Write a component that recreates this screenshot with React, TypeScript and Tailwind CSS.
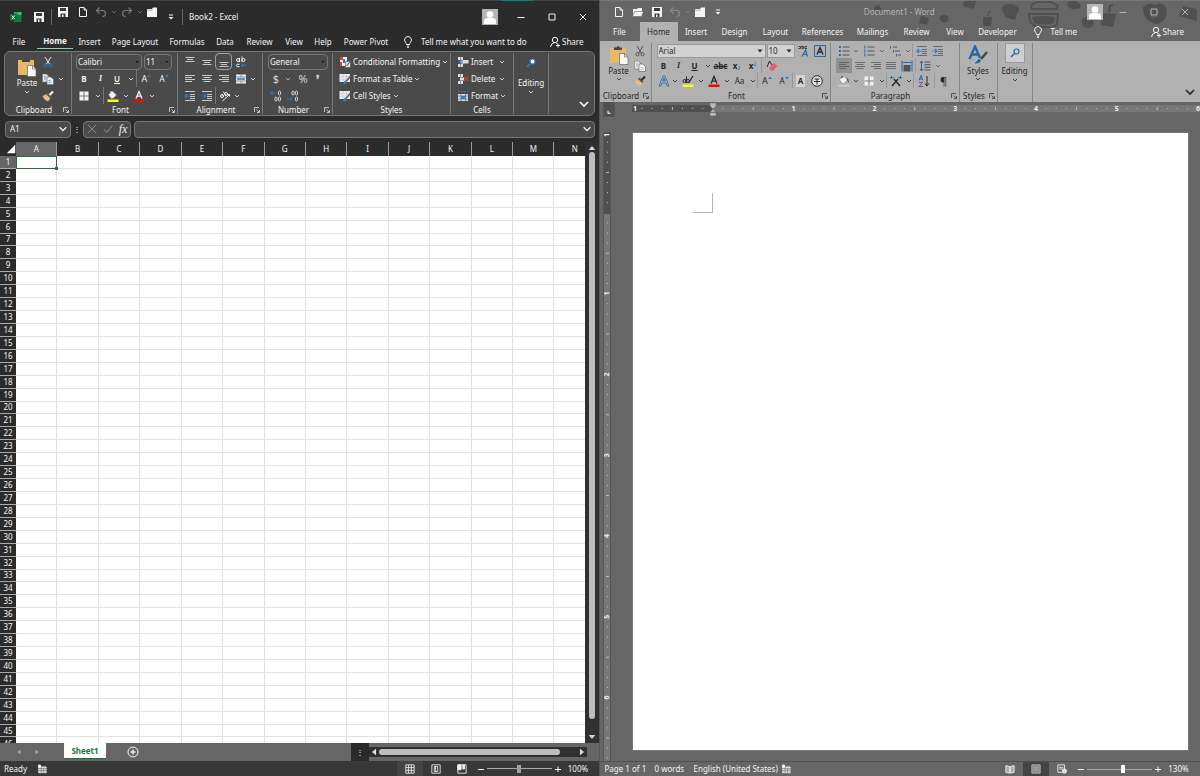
import type { ReactNode } from "react";

const COLUMNS = ["A", "B", "C", "D", "E", "F", "G", "H", "I", "J", "K", "L", "M", "N"];
const ROWS = Array.from({ length: 46 }, (_, i) => i + 1);

type IconProps = { className?: string; children?: ReactNode; box?: string };

// Base for all small drawings, 12x12 unless told otherwise
function Icon({ className = "size-3", box = "0 0 12 12", children }: IconProps) {
  return (
    <svg
      viewBox={box}
      className={`shrink-0 ${className}`}
      fill="none"
      stroke="currentColor"
      strokeWidth="1"
      aria-hidden="true"
    >
      {children}
    </svg>
  );
}

const Chevron = ({ className = "size-1.5" }: IconProps) => (
  <Icon className={className} box="0 0 6 6">
    <path d="M1 2l2 2 2-2" strokeWidth=".8" />
  </Icon>
);

const Triangle = ({ className = "size-1.5" }: IconProps) => (
  <Icon className={className} box="0 0 6 6">
    <path d="M.5 1.5h5L3 4.5z" fill="currentColor" stroke="none" />
  </Icon>
);

const SaveIcon = () => (
  <Icon>
    <path d="M1 1h10v10H1z" fill="currentColor" stroke="none" />
    <path d="M3 2h6v3H3zM3.5 7.5h5V11h-5z" fill="#3a3a3a" stroke="none" />
    <path d="M5 8.5h1.5V11H5z" fill="currentColor" stroke="none" />
  </Icon>
);

const PageIcon = () => (
  <Icon>
    <path d="M2.5 1.5h4.500l2.500 2.500v6.500h-7zM7 1.500v2.500h2.500" />
  </Icon>
);

const OpenIcon = () => (
  <Icon>
    <path d="M1 10V3h4l1-1h4v3" fill="currentColor" stroke="none" />
    <path d="M2.500 5.500h9l-2 5h-9z" fill="currentColor" stroke="#666" strokeWidth=".6" />
  </Icon>
);

const FolderIcon = () => (
  <Icon>
    <path d="M1 3h5l1-1.500h4V11H1z" fill="currentColor" stroke="none" />
    <path d="M1 4.200h5.500" stroke="#666" strokeWidth=".5" />
  </Icon>
);

const UndoIcon = ({ className = "size-3" }: IconProps) => (
  <Icon className={className}>
    <path d="M4.500 1.500L1.500 4.500l3 3M2 4.500h5.500q3 .3 3 3t-3 3.200" strokeWidth="1.200" />
  </Icon>
);

const CustomizeIcon = () => (
  <Icon className="size-2" box="0 0 8 8">
    <path d="M2 2h4" />
    <path d="M1.500 4h5L4 6.500z" fill="currentColor" stroke="none" />
  </Icon>
);

const BulbIcon = () => (
  <Icon>
    <path d="M4.500 8.500q0-1.200-1-2.200a3.400 3.400 0 1 1 5 0q-1 1-1 2.200zM4.800 10h2.400M5 11.300h2" />
  </Icon>
);

const ShareIcon = () => (
  <Icon>
    <circle cx="6" cy="4" r="2.700" />
    <path d="M1.500 11q.5-3.500 3.500-4.300M7 7q1 .3 1.500 1M9 7.500v4M7 9.500h4" />
  </Icon>
);

const ExcelLogo = () => (
  <Icon>
    <path d="M4 1h7.500v10H4z" fill="#107c41" stroke="none" />
    <path d="M7.500 1h4v3h-4z" fill="#33c481" stroke="none" />
    <path d="M4 1h3.500v3H4z" fill="#21a366" stroke="none" />
    <path d="M0 3h6.500v6.500H0z" fill="#0b6b38" stroke="none" />
    <path d="M1.800 4.500l3 3.700M4.800 4.500l-3 3.700" stroke="#fff" />
  </Icon>
);

const PasteIcon = () => (
  <Icon className="h-5 w-5" box="0 0 20 20">
    <path d="M1 3h16v15H1z" fill="#e8b965" stroke="none" />
    <path d="M5 2.500h2.500q1.500-3 3 0H13V5H5z" fill="#444" stroke="none" />
    <path d="M10.500 8.500h5l3.500 3.500v7.500h-8.500z" fill="#f6f6f6" stroke="#666" strokeWidth=".7" />
    <path d="M15.500 8.500V12H19" stroke="#777" strokeWidth=".8" />
  </Icon>
);

const CutIcon = ({ className = "text-zinc-200", rings = "#2b7cd3" }: IconProps & { rings?: string }) => (
  <Icon className={`size-3 ${className}`}>
    <path d="M3 1l4.500 7M9 1L4.500 8" />
    <circle cx="3.500" cy="9.300" r="1.600" stroke={rings} />
    <circle cx="8.500" cy="9.300" r="1.600" stroke={rings} />
  </Icon>
);

const CopyIcon = ({ ink = "#2b7cd3" }: { ink?: string }) => (
  <Icon>
    <path d="M.5 1h4l2 2v6h-6z" fill="#e4e4e4" stroke="#777" strokeWidth=".6" />
    <path d="M5 4h4l2.500 2.500v5H5z" fill="#f8f8f8" stroke="#666" strokeWidth=".7" />
    <path d="M2 4h2M2 6h2M6.500 7.500H9M6.500 9.500h3" stroke={ink} strokeWidth=".7" />
  </Icon>
);

const BrushIcon = () => (
  <Icon>
    <path d="M.5 6l4-2 4 4-2.500 3.500Q2 10 .5 6z" fill="#e8b982" stroke="none" />
    <path d="M4 4l1.500-1.500 4 4L8 8z" fill="#555" stroke="none" />
    <path d="M7.500 5l3.500-3.500" stroke="currentColor" strokeWidth="2.200" />
  </Icon>
);

const BordersIcon = () => (
  <Icon>
    <path d="M1.500 1.500h9v9h-9z" fill="#f2f2f2" stroke="none" />
    <path d="M6 1.500v9M1.500 6h9" stroke="#777" />
  </Icon>
);

const BucketIcon = ({ bar = "none" }: { bar?: string }) => (
  <Icon>
    <path d="M1.500 4.500L5.500 1l4 4-3.500 3.500h-2z" fill="#f5f5f5" stroke="#777" strokeWidth=".6" />
    <path d="M4 3V1" />
    <path d="M9 3q2.500 1 1.500 5L9 5z" fill="#2466a8" stroke="none" />
    <path d="M.5 9.500h11V12H.5z" fill={bar} stroke="none" />
  </Icon>
);

const FontColorIcon = () => (
  <Icon>
    <path d="M3 8.500L6 1.500l3 7M4 6.200h4" strokeWidth="1.300" />
    <path d="M.5 9.500h11V12H.5z" fill="#f00" stroke="none" />
  </Icon>
);

// Small caret beside the A of the grow and shrink buttons
const SizeCaret = ({ down = false }: { down?: boolean }) => (
  <Icon className="mb-1.5 size-1" box="0 0 4 4">
    <path d={down ? "M0 1h4L2 3.500z" : "M0 3h4L2 .5z"} fill="#2b7cd3" stroke="none" />
  </Icon>
);

function LinesIcon({ d }: { d: string }) {
  return (
    <Icon>
      <path d={d} strokeOpacity=".75" />
    </Icon>
  );
}

const LEFT = "M1 2.500h10M1 4.500h7M1 6.500h10M1 8.500h7";
const CENTER = "M1 2.500h10M2.500 4.500h7M1 6.500h10M2.500 8.500h7";
const RIGHT = "M1 2.500h10M4 4.500h7M1 6.500h10M4 8.500h7";
const JUSTIFY = "M1 2.500h10M1 4.500h10M1 6.500h10M1 8.500h10";

const IndentIcon = ({ out = false }: { out?: boolean }) => (
  <Icon>
    <path d="M1 1.500h10M6 4.500h5M6 6.500h5M6 8.500h5M1 10.500h10" strokeOpacity=".75" />
    <path
      d={out ? "M5.500 6H1M3 4L1 6l2 2" : "M.5 6H5M3 4l2 2-2 2"}
      stroke="#2b7cd3"
      strokeWidth="1.200"
    />
  </Icon>
);

const MergeIcon = () => (
  <Icon>
    <path d="M1 1.500h10v9H1z" fill="#eee" stroke="none" />
    <path d="M1 4h10M1 8h10M6 1.500V4M6 8v2.500" stroke="#666" strokeWidth=".7" />
    <path d="M2 6h8" stroke="#2b7cd3" strokeWidth="1.600" />
  </Icon>
);

// a and b as strokes, then the wrapped c with its return arrow
const WrapIcon = () => (
  <Icon>
    <circle cx="3" cy="4" r="1.500" />
    <path d="M4.500 2v4M7 .5V6" />
    <circle cx="8.500" cy="4" r="1.500" />
    <path d="M4.500 8.300q-3-.8-3 1.200t3 1.200" />
    <path d="M10 7.500v2H6.500M8 8L6.500 9.500 8 11" stroke="#2b7cd3" />
  </Icon>
);

const OrientIcon = () => (
  <Icon>
    <circle cx="3" cy="6" r="1.500" />
    <path d="M3 4.500l2 2.500M4 1.500l3 4" />
    <circle cx="7" cy="4" r="1.500" />
    <path d="M3.500 11l7-6.500M8.500 4.500h2V6.500" />
  </Icon>
);

const DecimalIcon = ({ more = false }: { more?: boolean }) => (
  <Icon>
    <ellipse cx="9.500" cy="3" rx="1.200" ry="2" strokeWidth=".8" />
    <ellipse cx="9.500" cy="9" rx="1.200" ry="2" strokeWidth=".8" />
    <ellipse cx="6" cy={more ? 9 : 3} rx="1.200" ry="2" strokeWidth=".8" />
    <path
      d={more ? "M5 3H.5M2.500 1.500L.5 3l2 1.500" : "M.5 9H5M3 7.500L5 9l-2 1.500"}
      stroke="#2b7cd3"
    />
  </Icon>
);

const CondIcon = () => (
  <Icon>
    <path d="M1 1h7v9H1z" fill="#eee" stroke="none" />
    <path d="M1 1h3v3H1zM1 6h2v4H1z" fill="#d6492a" stroke="none" />
    <path d="M4 3h2v4H4z" fill="#2b7cd3" stroke="none" />
    <path d="M6.500 5.500h5v6h-5z" fill="#ddd" stroke="#555" strokeWidth=".6" />
    <path d="M7.500 10l3-3.500" stroke="#444" />
  </Icon>
);

const TableBrushIcon = () => (
  <Icon>
    <path d="M.5 1h10.500v8H.5z" fill="#eee" stroke="none" />
    <path d="M.5 3.500H11M.5 6.200H11M4 1v8M7.500 1v8" stroke="#bbb" strokeWidth=".5" />
    <path d="M11.500 3L7 8.500" stroke="#666" strokeWidth="1.600" />
    <path d="M3.500 11.500q3 .5 4.500-2L6.500 7.500q-1.500.2-1.500 2z" fill="#2b7cd3" stroke="none" />
  </Icon>
);

const CellsIcon = ({ kind }: { kind: string }) => (
  <Icon>
    {kind === "Format" ? (
      <>
        <path d="M1 4h10v7H1z" fill="#ddd" stroke="none" />
        <path d="M1 6h10M1 9h10M4 4v7M8.500 4v7" stroke="#555" strokeWidth=".6" />
        <path d="M4 6h4.500v3H4z" fill="#2b7cd3" stroke="none" />
        <path d="M1 1.500h10" stroke="#2b7cd3" strokeDasharray="2 1" />
      </>
    ) : (
      <>
        <path d="M1 1h5v3H1zM1 8h5v3H1zM3 4.500h4v3H3z" fill="#ddd" stroke="none" />
        <path d="M3.500 1v3M3.500 8v3" stroke="#666" strokeWidth=".6" />
        {kind === "Insert" ? (
          <>
            <path d="M6 4h5.500v3.500H6z" fill="#ddd" stroke="none" />
            <path d="M6 6H2M4 4L2 6l2 2" stroke="#2b7cd3" strokeWidth="1.200" />
          </>
        ) : (
          <path d="M7 3.500l4.500 4.500M11.500 3.500L7 8" stroke="#c8402c" strokeWidth="1.200" />
        )}
      </>
    )}
  </Icon>
);

const FindIcon = ({ lens = "none", rim = "#2466a8" }: { lens?: string; rim?: string }) => (
  <Icon>
    <path d="M5.500 6.500L2 10" stroke={rim} strokeWidth="1.500" />
    <circle cx="7.500" cy="4.500" r="2.500" stroke={rim} strokeWidth="1.200" fill={lens} />
  </Icon>
);

const ListIcon = ({ kind }: { kind: string }) => (
  <Icon>
    {kind === "multi" ? (
      <>
        <path d="M4 2h4M6 6h5M9 10h3" />
        <path d="M1.500 1v2.500M4.500 5v2.500M7.500 9v2.500" stroke="#2466a8" />
      </>
    ) : (
      <>
        <path d="M4.500 2h7M4.500 6h7M4.500 10h7" />
        <path
          d={kind === "bullets" ? "M1 2h1.800M1 6h1.800M1 10h1.800" : "M1.800.5v3M1.800 4.500v3M1.800 8.500v3"}
          stroke="#2466a8"
          strokeWidth={kind === "bullets" ? "1.800" : "1"}
        />
      </>
    )}
  </Icon>
);

const SpacingIcon = () => (
  <Icon>
    <path d="M5.500 2h6M5.500 4.700h6M5.500 7.300h6M5.500 10h6" />
    <path d="M2.500 1v10M1 3l1.500-2L4 3M1 9l1.500 2L4 9" stroke="#2466a8" />
  </Icon>
);

const SortIcon = () => (
  <Icon>
    <path d="M1 5.500l2-5 2 5M1.800 4h2.500" stroke="#2466a8" />
    <path d="M1 7.500h3.500L1 11.500h4" stroke="#8646a8" />
    <path d="M9 1v10M7 8.500L9 11l2-2.500" />
  </Icon>
);

const LauncherIcon = () => (
  <Icon className="size-1.5" box="0 0 6 6">
    <path d="M.5 5V.5H5M2.500 2.500L5 5M5.500 3v2.500H3" strokeWidth=".7" />
  </Icon>
);

const MacroIcon = () => (
  <Icon className="size-2.5">
    <path d="M1.500 3h10v8h-10z" fill="#ddd" stroke="none" />
    <path d="M1.500 5.500h10M5 3v8M8 5.500V11M1.500 8h10" stroke="#666" strokeWidth=".7" />
    <circle cx="3" cy="2.500" r="2" fill="#fff" stroke="none" />
  </Icon>
);

const Avatar = () => (
  <Icon className="size-4 bg-[#b5b5b5]" box="0 0 16 16">
    <circle cx="8" cy="5.500" r="3.300" fill="#fff" stroke="none" />
    <path d="M2 15V12q0-2.500 3-3h6q3 .5 3 3v3z" fill="#fff" stroke="none" />
  </Icon>
);

type ToolProps = { label: string; className?: string; children?: ReactNode };

function Tool({ label, className = "w-4", children }: ToolProps) {
  return (
    <button
      type="button"
      aria-label={label}
      className={`flex shrink-0 items-center justify-center self-stretch ${className}`}
    >
      {children}
    </button>
  );
}

const Divider = ({ className = "bg-[#777]" }: { className?: string }) => (
  <span className={`w-px shrink-0 self-stretch ${className}`} />
);

function WindowButtons() {
  return (
    <>
      <Tool label="Minimize" className="w-[31px]">
        <Icon className="size-2" box="0 0 8 8"><path d="M.5 4.500h7" /></Icon>
      </Tool>
      <Tool label="Maximize" className="w-[31px]">
        <Icon className="size-2" box="0 0 8 8"><path d="M1 1h6v6H1z" /></Icon>
      </Tool>
      <Tool label="Close" className="w-[31px]">
        <Icon className="size-2" box="0 0 8 8"><path d="M1 1l6 6M7 1L1 7" /></Icon>
      </Tool>
    </>
  );
}

type GroupProps = { name: string; className: string; launcher?: boolean; children: ReactNode };

function Group({ name, className, launcher = true, children }: GroupProps) {
  return (
    <section className={`flex shrink-0 flex-col border-r ${className}`} aria-label={name}>
      <div className="flex flex-1">{children}</div>
      <div className="flex h-3 items-center">
        <span className="flex-1 text-center">{name}</span>
        {launcher && (
          <button type="button" aria-label={`${name} settings`} className="mr-0.5">
            <LauncherIcon />
          </button>
        )}
      </div>
    </section>
  );
}

type ComboProps = { label: string; value: string; className: string; arrow?: string };

function Combo({ label, value, className, arrow = "size-1.5" }: ComboProps) {
  return (
    <div className={`flex items-center border pr-0.5 ${className}`}>
      <select aria-label={label} className="min-w-0 flex-1 appearance-none bg-transparent pl-px">
        <option>{value}</option>
      </select>
      <Triangle className={arrow} />
    </div>
  );
}

function ExcelRibbon() {
  const line = "border-[#777]";
  const arrow = "size-1 text-zinc-900";
  return (
    <div className="mr-1 ml-1 flex h-[65px] rounded-md border border-[#777] bg-[#4a4a4a] py-px text-zinc-100">
      <Group name="Clipboard" className={`w-[67px] ${line}`}>
        <button type="button" className="ml-2.5 flex w-6 flex-col items-center pt-1">
          <PasteIcon />
          <span className="leading-3">Paste</span>
          <Chevron />
        </button>
        <div className="flex flex-col">
          <div className="flex h-[17px]"><Tool label="Cut" className="w-[18px]"><CutIcon /></Tool></div>
          <div className="flex h-[17px]">
            <Tool label="Copy" className="w-[18px]"><CopyIcon /></Tool>
            <Tool label="Copy options" className="w-2"><Chevron /></Tool>
          </div>
          <div className="flex h-[17px]"><Tool label="Format painter" className="w-[18px]"><BrushIcon /></Tool></div>
        </div>
      </Group>

      <Group name="Font" className={`w-[106px] ${line}`}>
        <div className="flex flex-1 flex-col pl-1">
          <div className="flex h-[17px] items-center gap-0.5">
            <Combo label="Font" value="Calibri" className="h-4 w-[66px] rounded-sm border-[#777]" arrow={arrow} />
            <Combo label="Font size" value="11" className="h-4 w-7 rounded-sm border-[#777]" arrow={arrow} />
          </div>
          <div className="flex h-[17px]">
            <Tool label="Bold"><b>B</b></Tool>
            <Tool label="Italic" className="w-[17px]"><i className="font-['Liberation_Serif',serif] font-bold">I</i></Tool>
            <Tool label="Underline"><span className="font-semibold underline">U</span></Tool>
            <Tool label="Underline options" className="w-[11px]"><Chevron /></Tool>
            <Divider />
            <Tool label="Grow font" className="w-[19px] text-[9px]">A<SizeCaret /></Tool>
            <Tool label="Shrink font">A<SizeCaret down /></Tool>
          </div>
          <div className="flex h-[17px]">
            <Tool label="Borders"><BordersIcon /></Tool>
            <Tool label="Border options" className="w-[11px]"><Chevron /></Tool>
            <Divider />
            <Tool label="Fill color" className="w-[18px]"><BucketIcon bar="#ff0" /></Tool>
            <Tool label="Fill options" className="w-2"><Chevron /></Tool>
            <Tool label="Font color" className="w-[18px]"><FontColorIcon /></Tool>
            <Tool label="Font color options" className="w-2"><Chevron /></Tool>
          </div>
        </div>
      </Group>

      <Group name="Alignment" className={`w-[85px] ${line}`}>
        <div className="flex flex-col pl-[3px]">
          <div className="flex h-[17px] items-center">
            <Tool label="Top align" className="w-[17px]"><LinesIcon d="M1.500 1.500h9M3 3.500h6M1.500 5.500h9" /></Tool>
            <Tool label="Middle align" className="w-[17px]"><LinesIcon d="M1.500 4.500h9M3 6.500h6M1.500 8.500h9" /></Tool>
            <Tool label="Bottom align" className="w-[17px] rounded-sm border border-zinc-400"><LinesIcon d="M1.500 6.500h9M3 8.500h6M1.500 10.500h9" /></Tool>
            <Tool label="Wrap text" className="w-[17px]"><WrapIcon /></Tool>
          </div>
          <div className="flex h-[17px]">
            <Tool label="Align left" className="w-[17px]"><LinesIcon d={LEFT} /></Tool>
            <Tool label="Align center" className="w-[17px]"><LinesIcon d={CENTER} /></Tool>
            <Tool label="Align right" className="w-[17px]"><LinesIcon d={RIGHT} /></Tool>
            <Tool label="Merge" className="w-[17px]"><MergeIcon /></Tool>
            <Tool label="Merge options" className="w-2"><Chevron /></Tool>
          </div>
          <div className="flex h-[17px]">
            <Tool label="Decrease indent" className="w-[17px]"><IndentIcon out /></Tool>
            <Tool label="Increase indent" className="w-[17px]"><IndentIcon /></Tool>
            <Divider />
            <Tool label="Orientation" className="w-[17px]"><OrientIcon /></Tool>
            <Tool label="Orientation options" className="w-2"><Chevron /></Tool>
          </div>
        </div>
      </Group>

      <Group name="Number" className={`w-[70px] ${line}`}>
        <div className="flex flex-1 flex-col pl-[5px]">
          <div className="flex h-[17px] items-center">
            <Combo label="Number format" value="General" className="h-4 w-[60px] rounded-sm border-[#777]" arrow={arrow} />
          </div>
          <div className="flex h-[17px] text-[11px] text-zinc-300">
            <Tool label="Currency">$</Tool>
            <Tool label="Currency options" className="w-2"><Chevron /></Tool>
            <Tool label="Percent" className="w-[22px]">%</Tool>
            <Tool label="Comma" className="w-2"><b>❜</b></Tool>
          </div>
          <div className="flex h-[17px]">
            <Tool label="Increase decimal"><DecimalIcon more /></Tool>
            <Tool label="Decrease decimal" className="w-[18px]"><DecimalIcon /></Tool>
          </div>
        </div>
      </Group>

      <Group name="Styles" launcher={false} className={`w-[118px] ${line}`}>
        <div className="flex flex-col pl-1.5">
          <button type="button" className="flex h-[17px] items-center gap-0.5"><CondIcon />Conditional Formatting<Chevron /></button>
          <button type="button" className="flex h-[17px] items-center gap-0.5"><TableBrushIcon />Format as Table<Chevron /></button>
          <button type="button" className="flex h-[17px] items-center gap-0.5"><TableBrushIcon />Cell Styles<Chevron /></button>
        </div>
      </Group>

      <Group name="Cells" launcher={false} className={`w-[63px] ${line}`}>
        <div className="flex w-[54px] flex-col pl-1.5">
          {["Insert", "Delete", "Format"].map((kind) => (
            <button key={kind} type="button" className="flex h-[17px] items-center gap-0.5">
              <CellsIcon kind={kind} />
              <span className="w-[29px] text-left">{kind}</span>
              <Chevron />
            </button>
          ))}
        </div>
      </Group>

      <section className={`flex w-[35px] shrink-0 flex-col items-center border-r pt-1 ${line}`} aria-label="Editing">
        <FindIcon lens="#fff" rim="#2b7cd3" />
        <button type="button" className="mt-2 flex flex-col items-center leading-3">
          Editing
          <Chevron />
        </button>
      </section>
      <div className="flex flex-1 items-end justify-end p-1">
        <button type="button" aria-label="Collapse ribbon"><Chevron className="size-3" /></button>
      </div>
    </div>
  );
}

function Tab({ label, className, active = "" }: { label: string; className: string; active?: string }) {
  return (
    <button type="button" className={`flex h-full shrink-0 items-center justify-center whitespace-nowrap ${className} ${active}`}>
      {label}
    </button>
  );
}

function Sheet() {
  return (
    <div className="flex min-h-0 flex-1 bg-[#2b2b2b]">
      <div className="h-0 min-h-full flex-1 overflow-hidden">
        <table className="h-[609px] w-[596px] min-w-full table-fixed border-separate border-spacing-0 bg-white leading-[10px]">
          <thead>
            <tr className="h-3.5 bg-[#2b2b2b] text-zinc-100">
              <th className="w-4 p-0" aria-label="Select all">
                <Icon className="ml-1.5 size-2.5"><path d="M11 1v10H1z" fill="#fff" stroke="none" /></Icon>
              </th>
              {COLUMNS.map((col) => (
                <th key={col} className={`border-r border-[#999] p-0 font-normal ${col === "A" ? "bg-[#666]" : ""}`}>{col}</th>
              ))}
            </tr>
          </thead>
          <tbody>
            {ROWS.map((row) => (
              <tr key={row}>
                <th className={`border-b border-[#aaa] p-0 font-normal text-zinc-100 ${row === 1 ? "bg-[#666]" : "bg-[#2b2b2b]"}`}>{row}</th>
                {COLUMNS.map((col) =>
                  row === 1 && col === "A" ? (
                    <td key={col} className="relative border border-[#1a7340] p-0">
                      <span className="absolute -right-0.5 -bottom-0.5 size-[3px] bg-[#1a7340]" />
                    </td>
                  ) : (
                    <td key={col} className="border-r border-b border-[#e1e1e1] p-0" />
                  ),
                )}
              </tr>
            ))}
          </tbody>
        </table>
      </div>
      <div className="flex w-3.5 flex-col items-center bg-[#303030] py-0.5 text-zinc-300">
        <Triangle className="size-2 rotate-180" />
        <span className="w-1.5 flex-1 rounded-full bg-[#bdbdbd]" />
        <Triangle className="mt-3.5 size-2" />
      </div>
    </div>
  );
}

function Zoom({ value, position, thumb }: { value: string; position: number; thumb: string }) {
  return (
    <>
      <Tool label="Zoom out" className="w-3"><Icon className="size-1.5" box="0 0 6 6"><path d="M0 3.500h6" /></Icon></Tool>
      <input
        type="range"
        aria-label="Zoom"
        defaultValue={position}
        className={`h-2.5 w-[65px] appearance-none bg-[linear-gradient(#aaa,#aaa)] bg-[length:100%_1px] bg-center bg-no-repeat [&::-webkit-slider-thumb]:h-2 [&::-webkit-slider-thumb]:w-1 [&::-webkit-slider-thumb]:appearance-none ${thumb}`}
      />
      <Tool label="Zoom in" className="w-3"><Icon className="size-1.5" box="0 0 6 6"><path d="M0 3.500h6M3 .5v6" /></Icon></Tool>
      <span className="w-[29px] text-center">{value}</span>
    </>
  );
}

function ExcelWindow() {
  return (
    <div className="flex min-w-0 flex-[599] flex-col border-r border-[#555] bg-[#2b2b2b] text-zinc-100">
      <div className="flex h-px bg-[#444]">
        <span className="ml-auto w-8 bg-[#00868b]" />
        <span className="w-[66px]" />
      </div>
      <header className="flex h-[31px] items-center pl-[5px]">
        <Tool label="Excel" className="w-[21px]"><ExcelLogo /></Tool>
        <Tool label="Save" className="w-[25px]"><SaveIcon /></Tool>
        <span className="h-4 w-px bg-[#666]" />
        <div className="flex h-[22px] self-start">
          <Tool label="Save file" className="w-[22px]"><SaveIcon /></Tool>
          <Tool label="New" className="w-[18px]"><PageIcon /></Tool>
          <Tool label="Undo" className="w-[18px] text-[#777]"><UndoIcon /></Tool>
          <Tool label="Undo options" className="w-2 text-[#777]"><Chevron /></Tool>
          <Tool label="Redo" className="w-[18px] text-[#777]"><UndoIcon className="size-3 -scale-x-100" /></Tool>
          <Tool label="Redo options" className="w-2 text-[#777]"><Chevron /></Tool>
          <Tool label="Open" className="w-4"><FolderIcon /></Tool>
        </div>
        <Tool label="Customize toolbar" className="w-[22px]"><CustomizeIcon /></Tool>
        <span className="h-4 w-px bg-[#666]" />
        <h1 className="ml-1.5 flex-1">Book2 - Excel</h1>
        <span className="mr-2"><Avatar /></span>
        <WindowButtons />
      </header>

      <nav className="flex h-[19px] items-center">
        <Tab label="File" className="ml-px w-9" />
        <div className="flex h-full w-9 flex-col pb-0.5">
          <Tab label="Home" className="w-full pt-0.5 font-bold" active="border-b border-[#8fd0b0]" />
        </div>
        <Tab label="Insert" className="w-[33px]" />
        <Tab label="Page Layout" className="w-[58px]" />
        <Tab label="Formulas" className="w-[46px]" />
        <Tab label="Data" className="w-[30px]" />
        <Tab label="Review" className="w-[39px]" />
        <Tab label="View" className="w-[30px]" />
        <Tab label="Help" className="w-7" />
        <Tab label="Power Pivot" className="w-[58px]" />
        <button type="button" className="ml-[7px] flex items-center gap-[7px] whitespace-nowrap"><BulbIcon />Tell me what you want to do</button>
        <button type="button" className="mr-[15px] ml-auto flex items-center gap-px"><ShareIcon />Share</button>
      </nav>

      <ExcelRibbon />

      <div className="flex h-[26px] items-center pr-1 pl-[5px]">
        <div className="flex h-[17px] w-[66px] items-center rounded-sm border border-[#777] bg-[#4a4a4a] pr-0.5 pl-1">
          <input aria-label="Name box" defaultValue="A1" className="min-w-0 flex-1 bg-transparent" />
          <Chevron className="size-2.5" />
        </div>
        <span className="w-3 text-center">⋮</span>
        <div className="flex h-[17px] w-12 items-center rounded-sm border border-[#777] bg-[#4a4a4a]">
          <Tool label="Cancel" className="w-4 text-[#999]"><Icon className="size-2.5"><path d="M1 1l10 10M11 1L1 11" /></Icon></Tool>
          <Tool label="Enter" className="w-4 text-[#999]"><Icon className="size-2.5"><path d="M1 6l3.500 4L11 2" /></Icon></Tool>
          <Tool label="Insert function" className="w-3.5"><i className="font-['Liberation_Serif',serif] text-xs">fx</i></Tool>
        </div>
        <div className="ml-[3px] flex h-[17px] flex-1 items-center rounded-sm border border-[#777] bg-[#4a4a4a] pr-0.5">
          <input aria-label="Formula" className="min-w-0 flex-1 bg-transparent" />
          <Chevron className="size-2.5" />
        </div>
      </div>

      <Sheet />

      <div className="flex h-[18px] items-center bg-[#666]">
        <Tool label="Previous sheet" className="ml-2.5 w-[18px] text-[#aaa]"><Triangle className="size-1.5 rotate-90" /></Tool>
        <Tool label="Next sheet" className="w-[18px] text-[#aaa]"><Triangle className="size-1.5 -rotate-90" /></Tool>
        <button type="button" className="mb-0.5 ml-[18px] h-4 w-[42px] border-b border-[#1a7340] bg-white font-bold text-[#1a7340]">Sheet1</button>
        <Tool label="New sheet" className="ml-5 w-3.5"><Icon><circle cx="6" cy="6" r="5" /><path d="M6 3.500v5M3.500 6h5" strokeWidth="1.400" /></Icon></Tool>
        <span className="ml-auto flex w-[18px] items-center justify-center self-stretch bg-[#2b2b2b]">⋮</span>
        <div className="mr-3 flex h-2.5 w-[218px] items-center bg-[#303030] px-px text-zinc-200">
          <Triangle className="size-2 rotate-90" />
          <span className="ml-px h-1.5 w-[181px] rounded-full bg-[#bdbdbd]" />
          <Triangle className="ml-auto size-2 -rotate-90" />
        </div>
      </div>

      <footer className="flex h-[15px] items-center bg-[#383838] pl-1">
        <span className="mr-2.5">Ready</span>
        <MacroIcon />
        <Tool label="Normal view" className="ml-auto w-[26px] bg-[#444]"><Icon className="size-2.5"><path d="M1 1h10v10H1zM1 4.300h10M1 7.600h10M4.300 1v10M7.600 1v10" /></Icon></Tool>
        <Tool label="Page layout view" className="w-[26px]"><Icon className="size-2.5"><path d="M1 1h10v10H1zM4 3h4v6H4zM5.500 3v6" /></Icon></Tool>
        <Tool label="Page break view" className="w-[26px]"><Icon className="size-2.5"><path d="M1 1h10v10H1z" /><path d="M1 1h4v6H1zM7 1h2v5H7z" fill="currentColor" /></Icon></Tool>
        <Zoom value="100%" position={50} thumb="[&::-webkit-slider-thumb]:bg-zinc-400" />
        <span className="w-1.5" />
      </footer>
    </div>
  );
}

function WordRibbon() {
  const line = "border-[#858585]";
  return (
    <div className="flex h-[61px] bg-[#b1b1b1] pt-0.5 text-zinc-800">
      <Group name="Clipboard" className={`w-[52px] ${line}`}>
        <button type="button" className="ml-1.5 flex w-[26px] flex-col items-center pt-0.5">
          <PasteIcon />
          <span className="mt-px leading-[10px]">Paste</span>
          <Chevron />
        </button>
        <div className="flex flex-col">
          <div className="flex h-[15px]"><Tool label="Cut"><CutIcon className="text-zinc-600" rings="#52525b" /></Tool></div>
          <div className="flex h-[15px]"><Tool label="Copy"><CopyIcon ink="#999" /></Tool></div>
          <div className="flex h-[15px]"><Tool label="Format painter"><BrushIcon /></Tool></div>
        </div>
      </Group>

      <Group name="Font" className={`w-[179px] ${line}`}>
        <div className="flex flex-col pl-[5px]">
          <div className="flex h-[15px] items-center">
            <Combo label="Font" value="Arial" className="h-3.5 w-[109px] border-[#999] bg-[#d2d2d2]" />
            <Combo label="Font size" value="10" className="ml-px h-3.5 w-7 border-[#999] bg-[#d2d2d2]" />
            <Tool label="Phonetic guide" className="w-[18px]">
              <Icon>
                <path d="M.5 3.500h2v-2h-2M4 .5v3h1.500v-2H4M9 1.500H7v2h2" strokeWidth=".8" />
                <path d="M4 11.500L7.500 5 9.500 11.500M5.500 9.500h3.500" stroke="#2466a8" strokeWidth="1.200" />
              </Icon>
            </Tool>
            <Tool label="Character border" className="w-3.5">
              <Icon><path d="M.5.5h11v11H.5z" stroke="#2466a8" /><path d="M3 9.500l3-7 3 7M4 7h4" strokeWidth="1.300" /></Icon>
            </Tool>
          </div>
          <div className="flex h-[15px]">
            <Tool label="Bold" className="w-3.5"><b>B</b></Tool>
            <Tool label="Italic" className="w-4"><i className="font-['Liberation_Serif',serif] font-bold">I</i></Tool>
            <Tool label="Underline" className="w-4"><b className="underline">U</b></Tool>
            <Tool label="Underline options" className="w-2.5"><Chevron /></Tool>
            <Tool label="Strikethrough" className="w-4"><b className="line-through">abc</b></Tool>
            <Tool label="Subscript" className="w-4"><b>x</b><span className="text-[#2466a8]">₂</span></Tool>
            <Tool label="Superscript" className="w-4"><b>x</b><span className="text-[#2466a8]">²</span></Tool>
            <Divider className="bg-[#999]" />
            <Tool label="Clear formatting" className="w-5">
              <Icon>
                <path d="M3 8l5-5 3.500 3L7 11H5z" fill="#e0607c" stroke="none" />
                <path d="M1 7l2.500-6L6 5" />
              </Icon>
            </Tool>
          </div>
          <div className="flex h-[15px]">
            <Tool label="Text effects" className="w-3.5">
              <Icon><path d="M1 11L5 1h2l4 10H9L8 8H4l-1 3zM4.800 6h2.400L6 3z" stroke="#2466a8" strokeWidth=".8" /></Icon>
            </Tool>
            <Tool label="Text effect options" className="w-2"><Chevron /></Tool>
            <Tool label="Highlight" className="w-[18px]">
              <Icon>
                <circle cx="2.500" cy="6" r="1.500" />
                <circle cx="6" cy="6" r="1.500" />
                <path d="M4 4v4M4.500 1.500v6" />
                <path d="M11 1L6.500 8" strokeWidth="1.300" />
                <path d="M.5 9.500h11V12H.5z" fill="#ff0" stroke="none" />
              </Icon>
            </Tool>
            <Tool label="Highlight options" className="w-2"><Chevron /></Tool>
            <Tool label="Font color" className="w-[18px]"><FontColorIcon /></Tool>
            <Tool label="Font color options" className="w-2"><Chevron /></Tool>
            <Tool label="Change case" className="w-[18px]">Aa</Tool>
            <Tool label="Change case options" className="w-2"><Chevron /></Tool>
            <Divider className="bg-[#999]" />
            <Tool label="Grow font" className="w-[19px] text-[9px]">A<SizeCaret /></Tool>
            <Tool label="Shrink font" className="w-[15px]">A<SizeCaret down /></Tool>
            <Divider className="bg-[#999]" />
            <Tool label="Character shading"><b className="bg-zinc-300 px-0.5">A</b></Tool>
            <Tool label="Enclose characters">
              <Icon><circle cx="6" cy="6" r="5.300" fill="#e5e5e5" /><path d="M3.500 4h5M3 6.500h6M6 4v5.500" /></Icon>
            </Tool>
          </div>
        </div>
      </Group>

      <Group name="Paragraph" className={`w-[129px] ${line}`}>
        <div className="flex flex-col pl-[5px]">
          <div className="flex h-[15px] text-zinc-600">
            <Tool label="Bullets"><ListIcon kind="bullets" /></Tool>
            <Tool label="Bullet options" className="w-2"><Chevron /></Tool>
            <Tool label="Numbering" className="w-[18px]"><ListIcon kind="numbers" /></Tool>
            <Tool label="Numbering options" className="w-2"><Chevron /></Tool>
            <Tool label="Multilevel list" className="w-[18px]"><ListIcon kind="multi" /></Tool>
            <Tool label="Multilevel options" className="w-2"><Chevron /></Tool>
            <Divider className="bg-[#999]" />
            <Tool label="Decrease indent" className="w-[18px]"><IndentIcon out /></Tool>
            <Tool label="Increase indent" className="w-3.5"><IndentIcon /></Tool>
          </div>
          <div className="flex h-[15px] text-zinc-600">
            <Tool label="Align left" className="w-4 bg-[#929292]"><LinesIcon d={LEFT} /></Tool>
            <Tool label="Align center" className="w-4"><LinesIcon d={CENTER} /></Tool>
            <Tool label="Align right" className="w-4"><LinesIcon d={RIGHT} /></Tool>
            <Tool label="Justify" className="w-[15px]"><LinesIcon d={JUSTIFY} /></Tool>
            <Tool label="Distribute" className="w-4">
              <Icon><path d="M1 .5v11M11 .5v11M2 2.500h8" stroke="#2466a8" /><path d="M2.500 5h7v6.500h-7z" fill="currentColor" stroke="none" /></Icon>
            </Tool>
            <Divider className="bg-[#999]" />
            <Tool label="Line spacing" className="w-[18px]"><SpacingIcon /></Tool>
            <Tool label="Line spacing options" className="w-2"><Chevron /></Tool>
          </div>
          <div className="flex h-[15px]">
            <Tool label="Shading"><BucketIcon bar="#c8c8c8" /></Tool>
            <Tool label="Shading options" className="w-2"><Chevron /></Tool>
            <Tool label="Borders" className="w-[18px]"><BordersIcon /></Tool>
            <Tool label="Border options" className="w-2"><Chevron /></Tool>
            <Divider className="bg-[#999]" />
            <Tool label="Asian layout" className="w-[18px]">
              <Icon><path d="M2 11l6-7M4 4l6 7" strokeWidth="1.300" /><path d="M4 2.500H.5M8 2.500h3.500M2 1L.5 2.500 2 4M10 1l1.500 1.500L10 4" stroke="#2466a8" /></Icon>
            </Tool>
            <Tool label="Asian layout options" className="w-2"><Chevron /></Tool>
            <Divider className="bg-[#999]" />
            <Tool label="Sort" className="w-5"><SortIcon /></Tool>
            <Divider className="bg-[#999]" />
            <Tool label="Show marks" className="w-[18px] text-[11px]">¶</Tool>
          </div>
        </div>
      </Group>

      <Group name="Styles" className={`w-[38px] ${line}`}>
        <button type="button" className="flex flex-1 flex-col items-center pt-0.5">
          <Icon className="h-5 w-5" box="0 0 20 20">
            <path d="M1.500 14L7 1.500 12 13M3.500 9.500h7" stroke="#2466a8" strokeWidth="2.400" />
            <path d="M19 7l-6 7" stroke="#444" strokeWidth="2.400" />
            <path d="M5 18.500q6 1.500 8.500-2.500l-2-2.500q-2.500 0-3 2.500z" fill="#2466a8" stroke="#eee" strokeWidth=".5" />
          </Icon>
          <span className="mt-px leading-[10px]">Styles</span>
          <Chevron />
        </button>
      </Group>

      <section className={`flex w-[35px] shrink-0 flex-col items-center border-r ${line}`} aria-label="Editing">
        <button type="button" className="flex flex-col items-center leading-3">
          <span className="mb-0.5 flex size-5 items-center justify-center border border-[#999] bg-[#cfcfcf]"><FindIcon /></span>
          Editing
          <Chevron />
        </button>
      </section>
      <div className="flex flex-1 items-end justify-end p-1">
        <button type="button" aria-label="Collapse ribbon"><Chevron className="size-3" /></button>
      </div>
    </div>
  );
}

// Ruler ticks: eighths as dots, halves as lines, a number on every inch
function HorizontalRuler() {
  const eighths = Array.from({ length: 56 }, (_, i) => i);
  return (
    <svg width="569" height="14" className="shrink-0" aria-label="Horizontal ruler">
      <path d="M0 3h81v7H0z" fill="#505050" />
      <path d="M81 3h488v7H81z" fill="#777" />
      {eighths.map((i) =>
        i % 8 === 0 ? (
          <text key={i} x={i === 0 ? 3 : i * 10.1} y="9" fontSize="7" fontWeight="700" fill="#eee" textAnchor="middle">
            {i === 8 ? "" : Math.abs(i / 8 - 1)}
          </text>
        ) : (
          <path key={i} d={`M${i * 10.1} ${i % 4 === 0 ? "5v3" : "6v1"}`} stroke="#bbb" />
        ),
      )}
      <text x="566" y="9" fontSize="7" fontWeight="700" fill="#eee" textAnchor="middle">6</text>
      <path d="M78 1h6v3l-3 3-3-3zM81 7l3 3H78zM78 10.500h6V14h-6z" fill="#bbb" stroke="#666" strokeWidth=".5" />
    </svg>
  );
}

function VerticalRuler() {
  const eighths = Array.from({ length: 63 }, (_, i) => i);
  return (
    <svg width="8" className="h-full overflow-hidden border-x border-[#555]" aria-label="Vertical ruler">
      <rect width="8" height="82" fill="#505050" />
      <rect y="82" width="8" height="100%" fill="#777" />
      {eighths.map((i) =>
        i % 8 === 0 ? (
          <text key={i} fontSize="7" fontWeight="700" fill="#eee" textAnchor="middle" transform={`translate(5 ${i === 0 ? 3 : i * 10.1}) rotate(-90)`}>
            {i === 8 ? "" : Math.abs(i / 8 - 1)}
          </text>
        ) : (
          <path key={i} d={`M${i % 4 === 0 ? 2 : 3} ${i * 10.1}h${i % 4 === 0 ? 3 : 1}`} stroke="#bbb" />
        ),
      )}
    </svg>
  );
}

// Lunch box doodles behind the Word title bar
function Doodles() {
  return (
    <svg viewBox="0 0 330 30" className="pointer-events-none absolute top-0 right-0 h-[30px] w-[330px]" fill="#505050" aria-hidden="true">
      <path d="M4 8q0-4 3-3l2-2 1 3q3 2 1 3H4z" />
      <path d="M51 15l8 2-2 7-8-2zM53 13l3-2" />
      <path d="M70 15q4-3 8 0 2 5-3 7-6-1-5-7zM74 14l3-3" />
      <path d="M94 0h12l-2 8-11-3z" />
      <path d="M113 16h9l-1 9h-8zM117 15l1-4 3-1v1l-2 1-1 3z" />
      <path d="M133 5q6-4 14 0 4 4 0 7l-2 7-10-3q-1-4-2-5-2-3 0-6z" />
      <path d="M161 6q2-6 12-5 10-1 15 4l-1 3h-25z" fill="none" stroke="#505050" strokeWidth="2" />
      <path d="M159 13h29l-1 10q-2 5-22 2-6-3-6-12z" fill="none" stroke="#505050" strokeWidth="2" />
      <path d="M162 16q10-2 23 0l-1 6q-10 3-20 0z" />
      <path d="M197 2q8-5 13 1 3 5-4 5-8 1-9-6z" />
      <path d="M212 18q5-4 11 0 2 8-4 9-8 1-7-9z" />
      <path d="M232 12l14 1-3 13-12-2zM238 11l1-7 4-1v2l-2 1-1 6z" />
      <path d="M273 6q6-6 12-2 7-4 11 3 3 10-6 15-4 2-7 0-10-3-10-16z" />
      <path d="M313 5l14 3v12l-18-5z" />
      <path d="M281 10v2M288 10v2M281 15q3 3 6 0M138 9v1M142 10v1M319 10v2" fill="none" stroke="#696969" />
    </svg>
  );
}

function WordWindow() {
  return (
    <div className="flex min-w-0 flex-[601] flex-col bg-[#666] text-zinc-100">
      <div className="relative border-t border-[#777]">
        <Doodles />
        <header className="relative flex h-[21px] items-center pl-2.5">
          <Tool label="New" className="w-[18px]"><PageIcon /></Tool>
          <Tool label="Open" className="w-5"><OpenIcon /></Tool>
          <Tool label="Save" className="w-[18px]"><SaveIcon /></Tool>
          <Tool label="Undo" className="w-[18px] text-[#888]"><UndoIcon /></Tool>
          <Tool label="Undo options" className="w-2 text-[#888]"><Chevron /></Tool>
          <Tool label="Open folder" className="w-4"><FolderIcon /></Tool>
          <Tool label="Customize toolbar" className="w-5"><CustomizeIcon /></Tool>
          <h1 className="flex-1 pr-4 text-center text-[#b5b5b5]">Document1 - Word</h1>
          <span className="mr-1"><Avatar /></span>
          <div className="flex self-stretch text-[#b5b5b5]"><WindowButtons /></div>
        </header>
        <nav className="relative flex h-[19px] items-center">
          <Tab label="File" className="w-10" />
          <Tab label="Home" className="w-[38px]" active="bg-[#b1b1b1] text-zinc-800" />
          <Tab label="Insert" className="w-[37px]" />
          <Tab label="Design" className="w-10" />
          <Tab label="Layout" className="w-[42px]" />
          <Tab label="References" className="w-[52px]" />
          <Tab label="Mailings" className="w-12" />
          <Tab label="Review" className="w-10" />
          <Tab label="View" className="w-[37px]" />
          <Tab label="Developer" className="w-12" />
          <button type="button" className="ml-2.5 flex items-center gap-[7px] whitespace-nowrap"><BulbIcon />Tell me</button>
          <button type="button" className="mr-4 ml-auto flex items-center gap-px"><ShareIcon />Share</button>
        </nav>
      </div>

      <WordRibbon />

      <div className="flex h-[15px] overflow-hidden">
        <button type="button" aria-label="Tab stop" className="mr-[17px] ml-[3px] w-3 shrink-0 border border-[#555] bg-[#505050] leading-3 font-bold">⌞</button>
        <HorizontalRuler />
      </div>

      <main className="flex min-h-0 flex-1 pt-[15px] pl-[3px]">
        <div className="h-0 min-h-full"><VerticalRuler /></div>
        <div className="mr-[11px] mb-2.5 ml-[21px] flex-1 border border-[#777] bg-white pt-[60px] pl-[60px]">
          <div className="size-5 border-r border-b border-[#b5b5b5]" />
        </div>
      </main>

      <footer className="flex h-[15px] items-center border-t border-[#505050] pl-[5px]">
        <span className="w-[50px] whitespace-nowrap">Page 1 of 1</span>
        <span className="w-[39px]">0 words</span>
        <span className="w-[87px] whitespace-nowrap">English (United States)</span>
        <MacroIcon />
        <Tool label="Read mode" className="ml-auto w-[26px]"><Icon className="size-2.5"><path d="M1 2l4.500 1v8L1 10zM11 2L6.500 3v8l4.500-1z" fill="#aaa" /></Icon></Tool>
        <Tool label="Print layout" className="w-[26px] bg-[#444]"><Icon className="size-2.5"><path d="M1 1h10v10H1z" fill="#888" stroke="#bbb" /><path d="M3 4h6M3 6h6M3 8h6" stroke="#aaa" /></Icon></Tool>
        <Tool label="Web layout" className="w-[26px]"><Icon className="size-2.5"><path d="M1 1h8v9H1zM2.500 4h5M2.500 6h5" /><circle cx="9" cy="8.500" r="2.500" fill="#ddd" /></Icon></Tool>
        <Zoom value="130%" position={56} thumb="[&::-webkit-slider-thumb]:bg-white" />
        <span className="w-[7px]" />
      </footer>
    </div>
  );
}

export default function App() {
  return (
    <div className="flex h-screen font-['Noto_Sans','Open_Sans',sans-serif] text-[8px] leading-3">
      <ExcelWindow />
      <WordWindow />
    </div>
  );
}
